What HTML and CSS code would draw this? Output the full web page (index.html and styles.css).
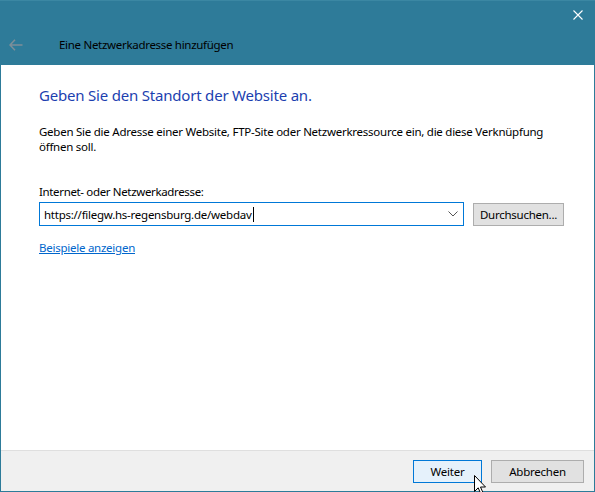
FILE: index.html
```html
<!DOCTYPE html>
<html lang="de">
<head>
<meta charset="utf-8">
<title>Eine Netzwerkadresse hinzufügen</title>
<link rel="stylesheet" href="styles.css">
</head>
<body>
<div class="window">
  <div class="header">
    <div class="titlebar">
      <span class="close" aria-label="Schließen">
        <svg width="10" height="10" viewBox="0 0 10 10"><path d="M0.5 0.5 L9.5 9.5 M9.5 0.5 L0.5 9.5" stroke="#fff" stroke-width="1.1" fill="none"/></svg>
      </span>
    </div>
    <div class="navbar">
      <span class="back">
        <svg width="14" height="12" viewBox="0 0 14 12"><path d="M6 0.8 L1 6 L6 11.2 M1 6 H13.5" stroke="#7d8f99" stroke-width="1.5" fill="none"/></svg>
      </span>
      <span class="title">Eine Netzwerkadresse hinzufügen</span>
    </div>
  </div>
  <div class="content">
    <h1 class="instruction">Geben Sie den Standort der Website an.</h1>
    <p class="desc">Geben Sie die Adresse einer Website, FTP-Site oder Netzwerkressource ein, die diese Verknüpfung öffnen soll.</p>
    <div class="label">Internet- oder Netzwerkadresse:</div>
    <div class="row">
      <div class="combo">
        <span class="value">https://filegw.hs-regensburg.de/webdav</span><span class="caret"></span>
        <span class="chev"><svg width="10" height="6" viewBox="0 0 10 6"><path d="M0.5 0.5 L5 5 L9.5 0.5" stroke="#555" stroke-width="1" fill="none"/></svg></span>
      </div>
      <button class="btn btn-browse">Durchsuchen...</button>
    </div>
    <a class="link" href="#">Beispiele anzeigen</a>
  </div>
  <div class="footer">
    <button class="btn btn-default">Weiter</button>
    <button class="btn btn-cancel">Abbrechen</button>
    <svg class="cursor" width="13" height="20" viewBox="0 0 13 20"><path d="M0.5 0.5 V16.5 L4.2 12.8 L6.8 18.8 L9 17.8 L6.5 12 H11.5 Z" fill="#fff" stroke="#000" stroke-width="1"/></svg>
  </div>
</div>
</body>
</html>
```
FILE: styles.css
```css
* { box-sizing: border-box; }
html, body { margin: 0; padding: 0; }
body {
  width: 595px;
  height: 492px;
  font-family: "Noto Sans", "Open Sans", sans-serif;
  font-size: 11.5px;
  letter-spacing: -0.25px;
  color: #000;
  background: #fff;
  overflow: hidden;
}
.window {
  width: 595px;
  height: 492px;
  display: flex;
  flex-direction: column;
  border: 1px solid #2d7b99;
  border-top: 0;
  background: #fff;
}
.header {
  height: 65px;
  background: #2e7b99;
  border-top: 1px solid #3b87a3;
  margin: 0 -1px;
  display: flex;
  flex-direction: column;
}
.titlebar {
  height: 29px;
  display: flex;
  justify-content: flex-end;
  align-items: center;
  padding-right: 12px;
}
.close { display: flex; width: 10px; height: 10px; margin-top: -2px; }
.navbar {
  flex: 1;
  display: flex;
  align-items: center;
  padding-left: 9px;
  padding-bottom: 6px;
}
.back { display: flex; width: 14px; height: 12px; }
.title {
  margin-left: 36px;
  color: #000;
  letter-spacing: -0.3px;
}
.content {
  flex: 1;
  padding: 18px 31px 0 38px;
  display: flex;
  flex-direction: column;
  align-items: flex-start;
}
.instruction {
  margin: 0;
  font-weight: normal;
  font-size: 15px;
  color: #1c3fb0;
  line-height: 24px;
  letter-spacing: -0.2px;
}
.desc {
  margin: 17px 0 0 0;
  line-height: 15px;
  width: 530px;
}
.label {
  margin-top: 30px;
  line-height: 16px;
  letter-spacing: -0.35px;
}
.row {
  margin-top: 2px;
  display: flex;
  gap: 9px;
  align-items: flex-start;
}
.combo {
  width: 425px;
  height: 24px;
  border: 1px solid #0078d7;
  display: flex;
  align-items: center;
  padding-left: 4px;
}
.caret { display: inline-block; width: 1px; height: 15px; background: #000; margin-left: 1px; }
.chev { margin-left: auto; margin-right: 5px; display: flex; }
.btn {
  font-family: inherit;
  font-size: 11.5px;
  letter-spacing: -0.25px;
  color: #000;
  background: #e1e1e1;
  border: 1px solid #adadad;
  height: 23px;
  padding: 0;
  margin: 0;
}
.btn-browse {
  width: 91px;
  margin-top: 1px;
}
.link {
  margin-top: 14px;
  color: #0066cc;
  text-decoration: underline;
}
.footer {
  height: 41px;
  background: #f0f0f0;
  border-top: 1px solid #dfdfdf;
  display: flex;
  justify-content: flex-end;
  align-items: flex-start;
  padding: 9px 10px 0 0;
  gap: 9px;
  position: relative;
}
.btn-default {
  width: 69px;
  background: #e5f1fb;
  border-color: #0078d7;
}
.btn-cancel {
  width: 93px;
}
.cursor {
  position: absolute;
  left: 473px;
  top: 24px;
}
```
